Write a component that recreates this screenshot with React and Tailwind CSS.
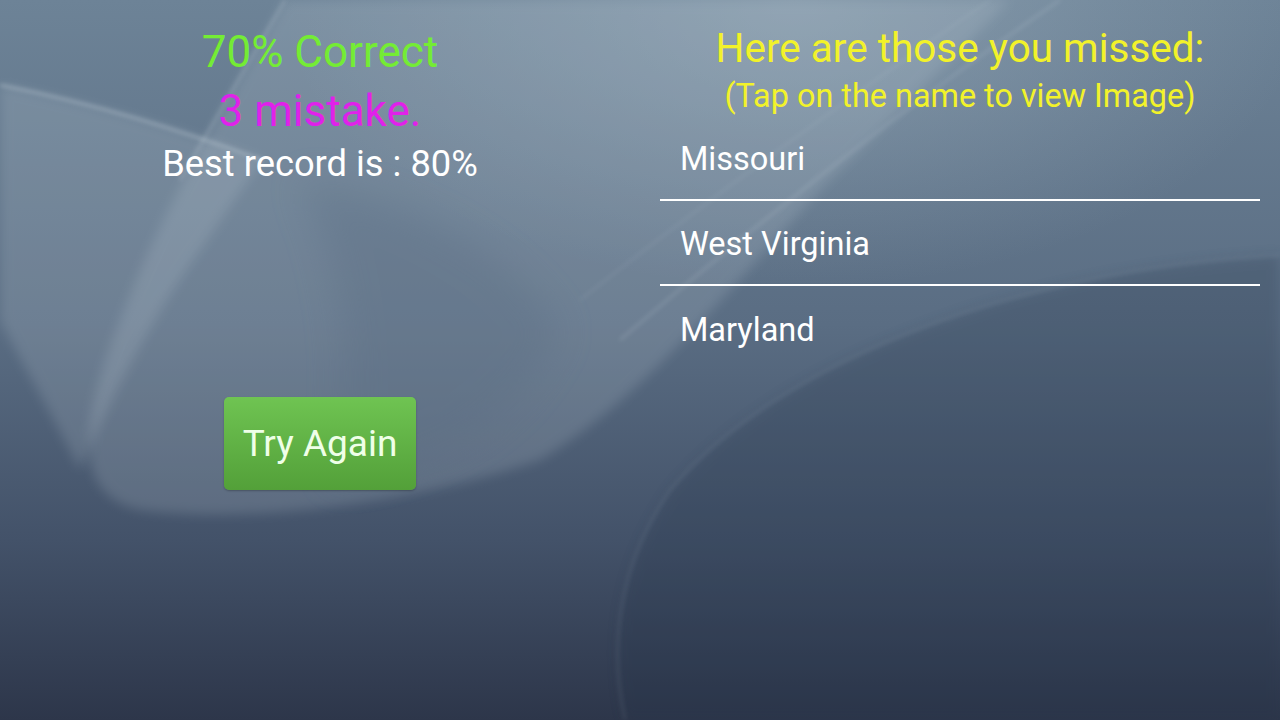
import React from "react";

// Soft blue-grey wallpaper with light ribbons and a dark arc
function Wallpaper() {
  return (
    <svg
      className="absolute inset-0 pointer-events-none"
      width="1280"
      height="720"
      viewBox="0 0 1280 720"
    >
      <defs>
        <linearGradient id="base" x1="0" y1="0" x2="0" y2="1">
          <stop offset="0" stopColor="#6d8397" />
          <stop offset="0.45" stopColor="#5a6d83" />
          <stop offset="0.75" stopColor="#435269" />
          <stop offset="1" stopColor="#2d364a" />
        </linearGradient>
        <radialGradient id="glowTop" cx="0.62" cy="0" r="0.4">
          <stop offset="0" stopColor="#9fb2c0" stopOpacity="0.5" />
          <stop offset="1" stopColor="#9fb2c0" stopOpacity="0" />
        </radialGradient>
        <filter id="soft" x="-20%" y="-20%" width="140%" height="140%">
          <feGaussianBlur stdDeviation="6" />
        </filter>
        <filter id="softer" x="-20%" y="-20%" width="140%" height="140%">
          <feGaussianBlur stdDeviation="18" />
        </filter>
        <filter id="line" x="-20%" y="-20%" width="140%" height="140%">
          <feGaussianBlur stdDeviation="2" />
        </filter>
      </defs>
      <rect width="1280" height="720" fill="url(#base)" />
      <rect width="1280" height="720" fill="url(#glowTop)" />

      {/* left wing */}
      <path
        d="M0,85 C100,105 200,135 262,160 L200,250 C150,320 110,400 80,470 C50,410 20,360 0,320 Z"
        fill="#c6d3dc"
        opacity="0.18"
        filter="url(#soft)"
      />
      {/* big ribbon sweeping down to the lower-left tongue */}
      <path
        d="M285,0 C230,100 165,200 120,320 C80,420 70,495 140,510 C260,525 420,500 540,460 C640,400 720,300 820,190 C900,110 960,50 1010,0 Z"
        fill="#c6d3dc"
        opacity="0.18"
        filter="url(#soft)"
      />
      {/* fade on the right side of the tongue */}
      <path
        d="M300,180 C420,200 520,260 560,330 C520,420 440,470 330,480 C360,380 340,260 300,180 Z"
        fill="#5a6d83"
        opacity="0.35"
        filter="url(#softer)"
      />
      {/* bright edges */}
      <path
        d="M0,85 C100,105 180,130 262,160"
        stroke="#dfe8ee"
        strokeWidth="3"
        fill="none"
        opacity="0.3"
        filter="url(#line)"
      />
      <path
        d="M285,0 C250,60 215,120 180,180"
        stroke="#dfe8ee"
        strokeWidth="3"
        fill="none"
        opacity="0.18"
        filter="url(#line)"
      />
      {/* thin streaks */}
      <path
        d="M1060,0 C900,110 760,220 620,340"
        stroke="#dfe8ee"
        strokeWidth="3"
        fill="none"
        opacity="0.13"
        filter="url(#line)"
      />
      <path
        d="M990,0 C860,90 720,190 580,300"
        stroke="#dfe8ee"
        strokeWidth="2"
        fill="none"
        opacity="0.1"
        filter="url(#line)"
      />
      {/* dark arc lower right */}
      <path
        d="M1280,255 C1000,270 770,370 670,490 C615,570 610,650 625,720 L1280,720 Z"
        fill="#243046"
        opacity="0.22"
        filter="url(#soft)"
      />
      <path
        d="M1280,255 C1000,270 770,370 670,490 C615,570 610,650 625,720"
        stroke="#b9c8d3"
        strokeWidth="3"
        fill="none"
        opacity="0.1"
        filter="url(#line)"
      />
    </svg>
  );
}

const missed = ["Missouri", "West Virginia", "Maryland"];

export default function App() {
  return (
    <div
      className="relative w-[1280px] h-[720px] overflow-hidden"
      style={{ fontFamily: "Roboto, 'Noto Sans', sans-serif" }}
    >
      <Wallpaper />
      <div className="relative flex w-full h-full">
        {/* score column */}
        <div className="w-[640px] flex flex-col items-center pt-[26px]">
          <div className="text-[44px] leading-[52px] text-[#74ec34]">70% Correct</div>
          <div className="text-[44px] leading-[58px] text-[#e021ea] mt-[4px]">3 mistake.</div>
          <div className="text-[36.3px] leading-[48px] text-white">Best record is : 80%</div>
          <button className="mt-[209px] w-[192px] h-[93px] rounded-[5px] bg-gradient-to-b from-[#6fc452] to-[#53a039] text-[37px] text-[#efffe8] shadow-[0_1px_2px_rgba(0,0,0,0.25)]">
            Try Again
          </button>
        </div>

        {/* missed list */}
        <div className="w-[640px] flex flex-col pt-[24px] pl-[20px] pr-[20px]">
          <div className="text-center text-[40.5px] leading-[48px] text-[#f2f22a]">
            Here are those you missed:
          </div>
          <div className="text-center text-[32.4px] leading-[48px] text-[#f2f22a]">
            (Tap on the name to view Image)
          </div>
          <div className="flex flex-col -mt-[4px]">
            {missed.map((name, i) => (
              <div
                key={name}
                className={
                  "h-[85px] flex items-center pt-[4px] pl-[20px] text-[32.5px] text-white" +
                  (i < missed.length - 1 ? " border-b-2 border-white" : "")
                }
              >
                {name}
              </div>
            ))}
          </div>
        </div>
      </div>
    </div>
  );
}
